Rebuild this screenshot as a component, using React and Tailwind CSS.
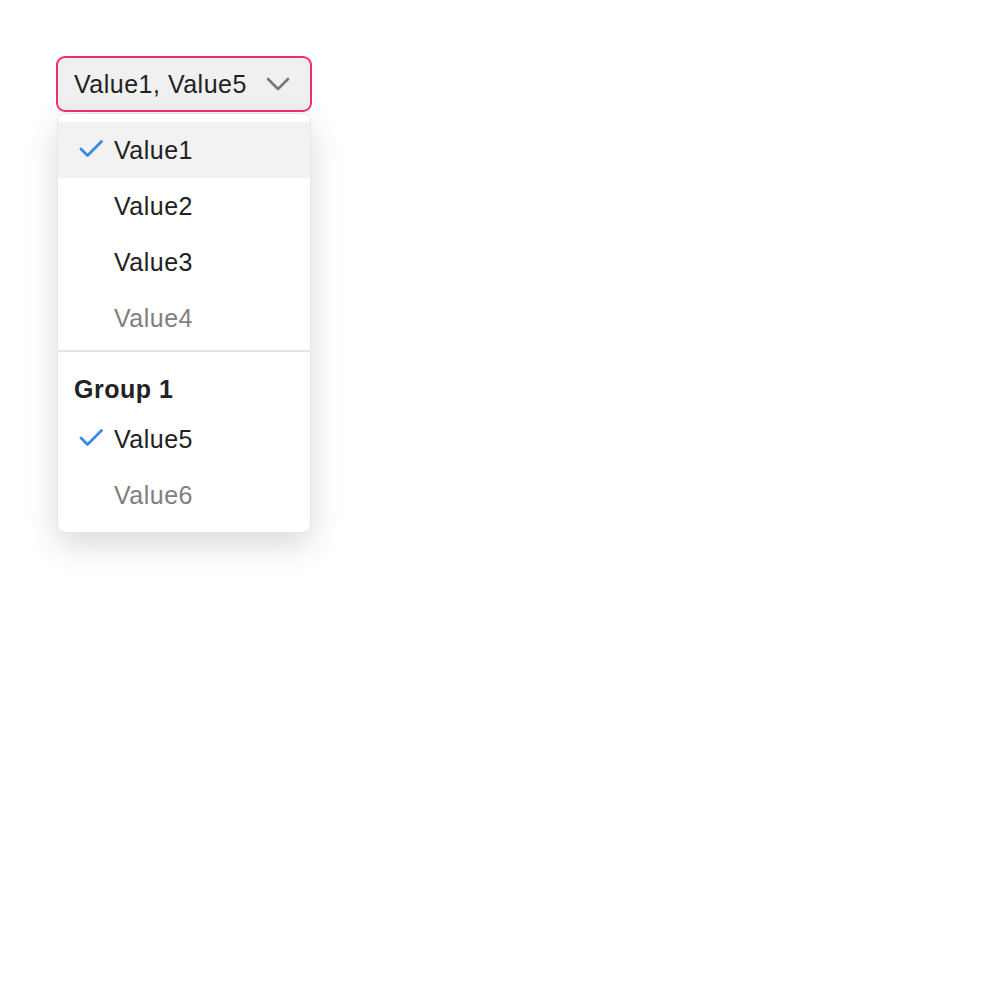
import React from "react";

const Check = () => (
  <svg width="24" height="20" viewBox="0 0 24 20" className="shrink-0">
    <path d="M2 9 L8.5 15.5 L22.5 1.5" fill="none" stroke="#3a8ae2" strokeWidth="2.8" strokeLinecap="round" strokeLinejoin="round" />
  </svg>
);

const Item = ({ label, checked, active, disabled }) => (
  <div className={`flex items-center h-[56px] pl-[21px] ${active ? "bg-[#f2f2f2]" : ""}`}>
    <div className="w-[24px] flex items-center">{checked ? <Check /> : null}</div>
    <span className={`ml-[11px] text-[25px] tracking-[0.5px] leading-none ${disabled ? "text-[#808080]" : "text-[#222222]"}`}>{label}</span>
  </div>
);

export default function App() {
  return (
    <div className="min-h-[1000px] bg-white pt-[56px] pl-[56px]" style={{ fontFamily: '"Liberation Sans", Arial, sans-serif' }}>
      <div className="w-[256px] h-[56px] rounded-[9px] border-2 border-[#f0306a] bg-[#f0f0f0] flex items-center pl-[16px] pr-[20px] justify-between">
        <span className="text-[25px] tracking-[0.5px] text-[#222222] leading-none">Value1, Value5</span>
        <svg width="24" height="14" viewBox="0 0 24 14">
          <path d="M2 2 L12 12 L22 2" fill="none" stroke="#777777" strokeWidth="2.6" strokeLinecap="round" strokeLinejoin="round" />
        </svg>
      </div>
      <div className="ml-[1px] mt-[1px] w-[254px] bg-white rounded-[8px] border border-[#e6e6e6] pt-[8px] pb-[9px] shadow-[0_12px_32px_rgba(0,0,0,0.15)]">
        <Item label="Value1" checked active />
        <Item label="Value2" />
        <Item label="Value3" />
        <Item label="Value4" disabled />
        <div className="mt-[4px] h-[2px] bg-[#e4e4e4]" />
        <div className="pt-[22px] pb-[7px] pl-[16px] text-[25px] tracking-[0.5px] font-bold text-[#222222] leading-[30px]">Group 1</div>
        <Item label="Value5" checked />
        <Item label="Value6" disabled />
      </div>
    </div>
  );
}
